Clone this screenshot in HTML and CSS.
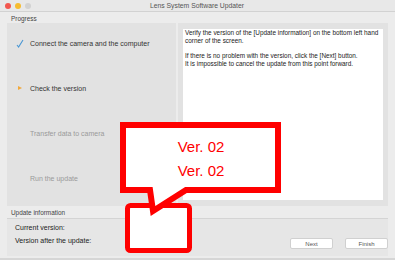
FILE: index.html
```html
<!DOCTYPE html>
<html lang="en">
<head>
    <meta charset="UTF-8">
    <title>Lens System Software Updater</title>
    <link rel="stylesheet" href="styles.css">
</head>
<body>
    <div class="window">
        <div class="titlebar">
            <span class="light red"></span>
            <span class="light yellow"></span>
            <span class="light off"></span>
            <span class="title">Lens System Software Updater</span>
        </div>

        <div class="group-label">Progress</div>
        <div class="panels">
            <div class="steps">
                <div class="step done"><span class="icon">
                    <svg width="8" height="9" viewBox="0 0 8 9"><path d="M1 6 L2.6 8 L7 1" fill="none" stroke="#4a97d4" stroke-width="1.1"/></svg>
                </span>Connect the camera and the computer</div>
                <div class="step current"><span class="icon">
                    <svg width="6" height="6" viewBox="0 0 6 6"><path d="M1 1 L5 3 L1 5 Z" fill="#f2a93b"/></svg>
                </span>Check the version</div>
                <div class="step todo"><span class="icon"></span>Transfer data to camera</div>
                <div class="step todo"><span class="icon"></span>Run the update</div>
            </div>
            <div class="message-frame">
                <div class="message">
                    <p>Verify the version of the [Update information] on the bottom left hand corner of the screen.</p>
                    <p>If there is no problem with the version, click the [Next] button.<br>It is impossible to cancel the update from this point forward.</p>
                </div>
            </div>
        </div>

        <div class="group-label lower">Update information</div>
        <div class="update-panel">
            <div class="versions">
                <div>Current version:</div>
                <div>Version after the update:</div>
            </div>
            <div class="buttons">
                <button>Next</button>
                <button>Finish</button>
            </div>
        </div>
    </div>

    <!-- annotation callout drawn over the window -->
    <svg class="callout" width="395" height="260" viewBox="0 0 395 260">
        <rect x="127.5" y="205.5" width="62" height="45" rx="3" fill="#fff" stroke="#ff0000" stroke-width="5"/>
        <path d="M123 125 H278 V190 H186 L153 211 L150 190 H123 Z" fill="#fff" stroke="#ff0000" stroke-width="6" stroke-linejoin="miter"/>
        <text x="201" y="152" text-anchor="middle">Ver. 02</text>
        <text x="201" y="176" text-anchor="middle">Ver. 02</text>
    </svg>
</body>
</html>
```

FILE: styles.css
```css
body {
    margin: 0;
    width: 395px;
    height: 260px;
    overflow: hidden;
    background: #fff;
    font-family: "Liberation Sans", Arial, sans-serif;
    position: relative;
}
.window {
    width: 395px;
    height: 258px;
    background: #ececec;
    border-bottom: 2px solid #d6d6d6;
}
.titlebar {
    height: 11px;
    position: relative;
    background: #e8e8e8;
    border-bottom: 1px solid #d2d2d2;
    display: flex;
    align-items: center;
    gap: 4px;
    padding-left: 5px;
}
.light {
    width: 6px;
    height: 6px;
    border-radius: 50%;
}
.red { background: #f2574f; }
.yellow { background: #f6bc2f; }
.off { background: #d2d2d2; }
.title {
    flex: 1;
    text-align: center;
    font-size: 6.8px;
    color: #555;
    padding-right: 36px;
}
.group-label {
    font-size: 6.4px;
    color: #444;
    padding: 3px 0 0 11px;
    height: 8px;
}
.group-label.lower {
    padding-top: 3px;
    height: 8px;
}
.panels {
    display: flex;
    gap: 2px;
    padding: 0 7px;
    height: 183px;
}
.steps {
    width: 169px;
    background: #e2e2e2;
    display: flex;
    flex-direction: column;
    gap: 35px;
    padding-top: 15px;
    box-sizing: border-box;
}
.step {
    height: 10px;
    display: flex;
    align-items: center;
    font-size: 7px;
    color: #333;
}
.step.todo { color: #9a9a9a; }
.icon {
    width: 23px;
    display: flex;
    justify-content: center;
    padding-left: 2px;
    box-sizing: border-box;
}
.message-frame {
    flex: 1;
    background: #e2e2e2;
    padding: 6px 5px 6px 5px;
}
.message {
    background: #fff;
    height: 100%;
    padding: 0 2px;
    box-sizing: border-box;
    font-size: 6.4px;
    line-height: 8px;
    color: #222;
}
.message p { margin: 0 0 7px 0; }
.update-panel {
    margin: 1px 7px 0;
    height: 37px;
    background: #e6e6e6;
    border-top: 1px solid #d4d4d4;
    display: flex;
    justify-content: space-between;
}
.versions {
    padding: 5px 0 0 8px;
    font-size: 7px;
    color: #222;
    display: flex;
    flex-direction: column;
    gap: 6px;
}
.buttons {
    display: flex;
    align-items: flex-end;
    gap: 12px;
    padding-bottom: 7px;
}
.buttons button {
    width: 43px;
    height: 11px;
    padding: 0;
    font-family: inherit;
    font-size: 6px;
    color: #555;
    background: #fff;
    border: 1px solid #d0d0d0;
    border-radius: 2px;
}
.callout {
    position: absolute;
    left: 0;
    top: 0;
    pointer-events: none;
}
.callout text {
    fill: #ff0000;
    font-family: "Liberation Sans", Arial, sans-serif;
    font-size: 15px;
}
```
